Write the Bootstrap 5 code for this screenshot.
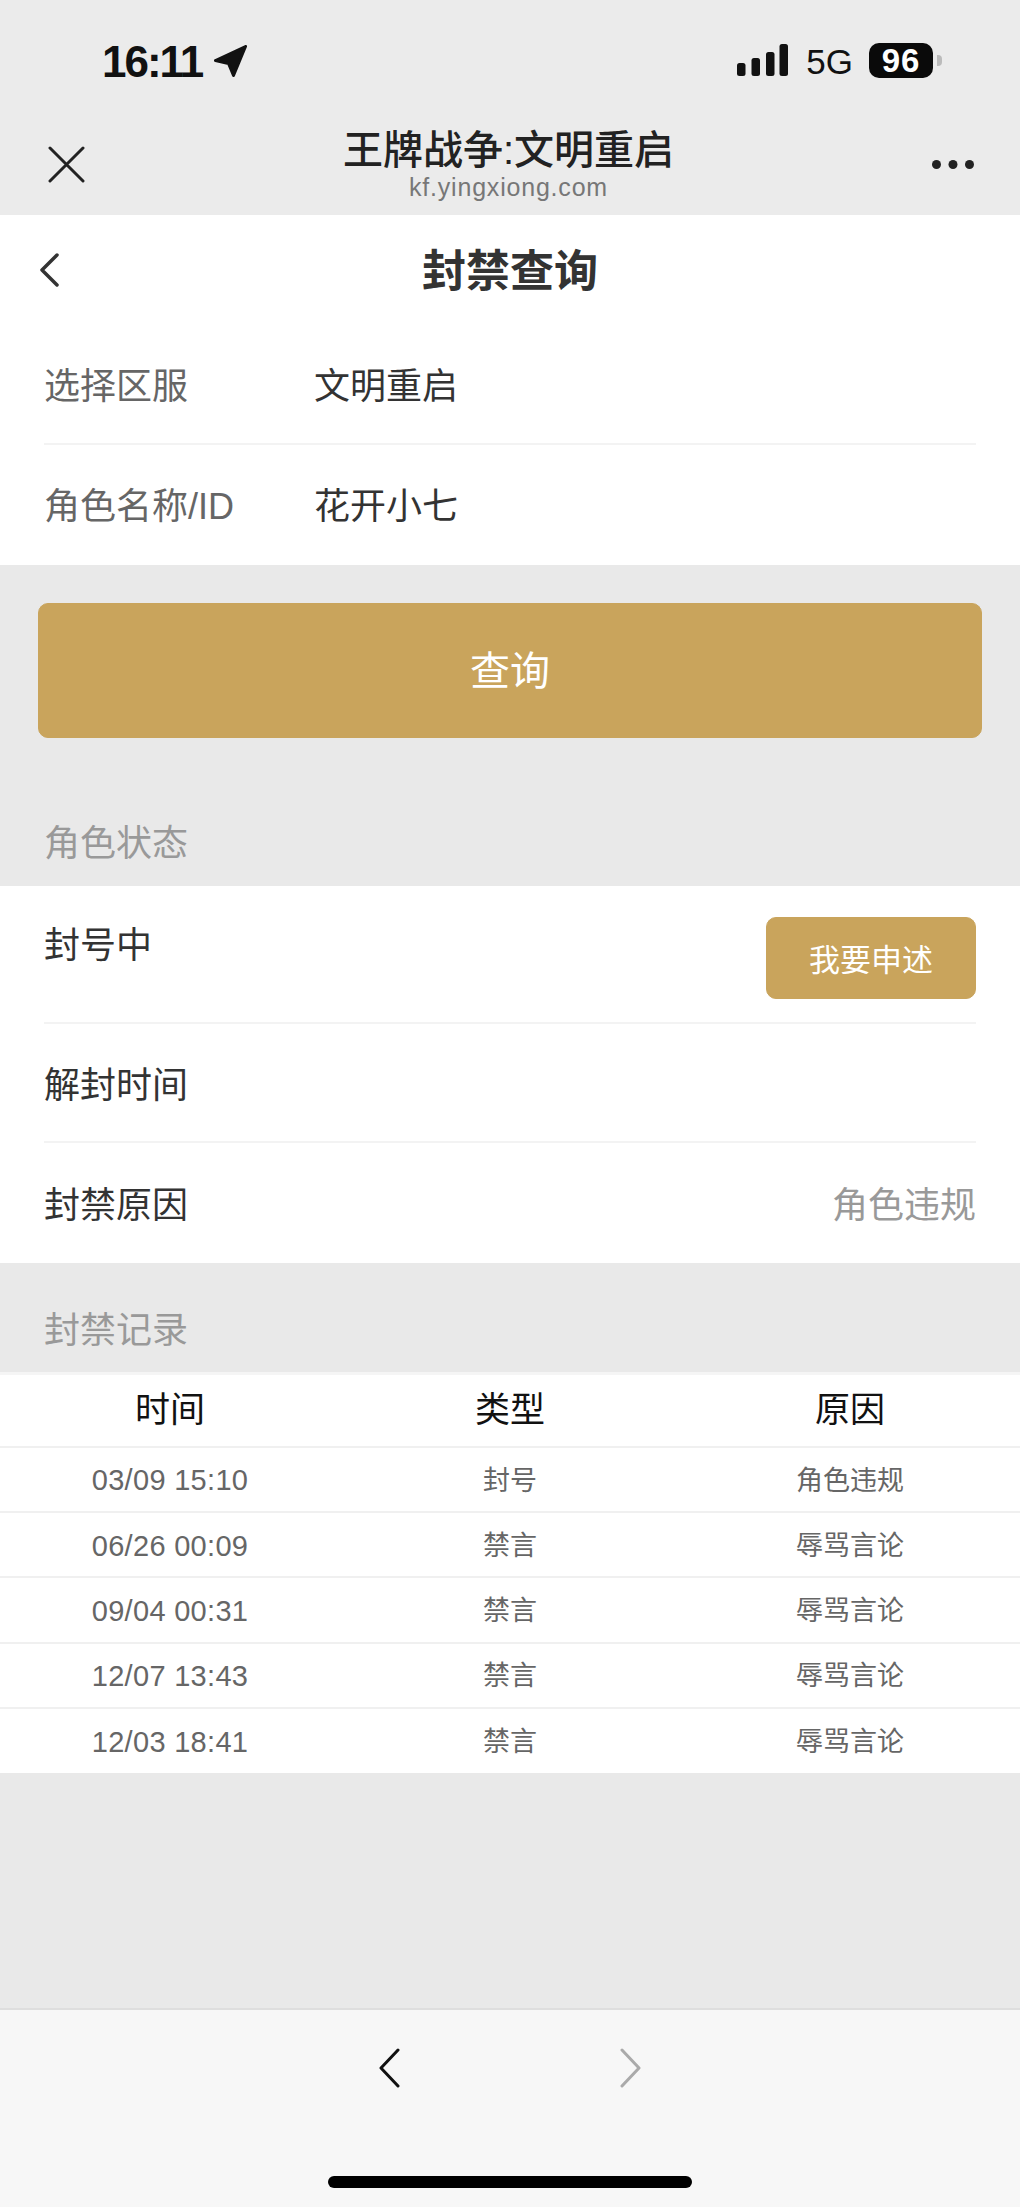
<!DOCTYPE html>
<html lang="zh-CN">
<head>
  <meta charset="UTF-8" />
  <title>封禁查询</title>
  <link href="https://cdn.jsdelivr.net/npm/bootstrap@5.3.3/dist/css/bootstrap.min.css" rel="stylesheet">
  <style>
    body {
      background: #e9e9e9;
      font-family: "Liberation Sans", "Noto Sans CJK SC", sans-serif;
      color: #333;
    }
    .page { height: 2207px; }
    .top-area { background: #ebebeb; height: 215px; }
    .status-bar { height: 122px; padding: 42px 87px 0 102px; color: #111; }
    .clock { font-size: 44px; font-weight: 700; line-height: 36px; letter-spacing: -2px; margin-top: 2px; }
    .arrow-icon { margin: 3px 0 0 12px; }
    .signal-icon { margin-top: 2px; }
    .net { font-size: 35px; line-height: 36px; margin: 2px 16px 0 18px; }
    .batt {
      width: 64px; height: 35px; margin-top: 1px; background: #0a0a0a; color: #fff; border-radius: 10px;
      font-size: 33px; font-weight: 700; line-height: 35px; letter-spacing: 1px; text-align: center; position: relative;
    }
    .batt::after {
      content: ""; position: absolute; right: -9px; top: 12px; width: 5px; height: 11px;
      background: #bbb; border-radius: 0 4px 4px 0;
    }
    .wx-bar { height: 93px; padding: 0 46px 8px 48px; }
    .wx-title { font-size: 40px; font-weight: 500; line-height: 46px; color: #222; margin-top: -2px; }
    .wx-url { font-size: 25px; line-height: 28px; color: #777; letter-spacing: .8px; }
    .panel-white { background: #fff; }
    .page-head { height: 110px; display: grid; grid-template-columns: 1fr auto 1fr; }
    .page-head svg { margin: 38px 0 0 40px; }
    .page-title { font-size: 44px; font-weight: 700; color: #333; line-height: 110px; margin-top: 2px; }
    .form-line {
      height: 120px; margin: 0 44px; font-size: 36px; line-height: 124px;
      border-bottom: 2px solid #f3f3f3;
    }
    .form-line:last-child { border-bottom: 0; }
    .form-key { width: 270px; color: #666; }
    .form-val { color: #333; }
    .gold-btn { --bs-btn-bg: #c9a45c; --bs-btn-border-color: #c9a45c; --bs-btn-color: #fff; }
    .query-wrap { padding: 38px 38px 0; }
    .query-btn { height: 135px; font-size: 40px; border-radius: 10px; }
    .sect-name { font-size: 36px; color: #999; line-height: 48px; padding-left: 44px; }
    .sect-status { height: 148px; padding-top: 82px; }
    .sect-record { height: 109px; padding-top: 44px; }
    .state-line {
      margin: 0 44px; font-size: 36px; color: #333; border-bottom: 2px solid #f3f3f3;
      height: 119px; line-height: 123px;
    }
    .state-line:last-child { border-bottom: 0; height: 120px; line-height: 125px; }
    .state-first { height: 138px; line-height: 120px; }
    .appeal-btn { width: 210px; height: 82px; margin-top: 31px; padding-top: 10px; font-size: 31px; line-height: 1; border-radius: 10px; }
    .muted-val { color: #999; }
    .record-table { border-top: 3px solid #f5f5f5; }
    .record-table .table { margin: 0; table-layout: fixed; --bs-table-border-color: #f0f0f0; }
    .record-table th, .record-table td { text-align: center; padding: 0; vertical-align: middle; border-bottom-width: 2px; }
    .record-table th { height: 72px; font-size: 35px; font-weight: 400; color: #111; }
    .record-table td { height: 65.2px; padding-top: 3px; font-size: 27px; color: #666; }
    .record-table tr:last-child td { border-bottom: 0; }
    .record-table .when { font-size: 29px; letter-spacing: .3px; }
    .filler { flex: 1 1 auto; }
    .bottom-bar { height: 199px; background: #f7f7f7; border-top: 2px solid #dedede; }
    .bottom-nav { padding-top: 38px; padding-left: 379px; gap: 220px; }
    .home-pill { margin: 88px 0 0 328px; width: 364px; height: 12px; background: #000; border-radius: 6px; }
  </style>
</head>
<body>
  <div class="page d-flex flex-column">
    <div class="top-area">
      <div class="status-bar d-flex align-items-start">
        <span class="clock">16:11</span>
        <svg class="arrow-icon" width="33" height="32" viewBox="0 0 33 32"><path d="M31.500 1.500 L1.500 15.500 L14.500 18.500 L19.500 30.500 Z" fill="#111" stroke="#111" stroke-width="3" stroke-linejoin="round"/></svg>
        <div class="ms-auto d-flex align-items-start">
          <svg class="signal-icon" width="51" height="32" viewBox="0 0 51 32"><rect x="0" y="19" width="8.500" height="13" rx="2.500" fill="#111"/><rect x="14.500" y="14" width="8.500" height="18" rx="2.500" fill="#111"/><rect x="29" y="8" width="8.500" height="24" rx="2.500" fill="#111"/><rect x="42.500" y="0" width="8.500" height="32" rx="2.500" fill="#111"/></svg>
          <span class="net">5G</span>
          <div class="batt">96</div>
        </div>
      </div>
      <div class="wx-bar d-flex align-items-center justify-content-between">
        <svg width="37" height="37" viewBox="0 0 37 37"><path d="M2 2 L35 35 M35 2 L2 35" stroke="#222" stroke-width="3" stroke-linecap="round" fill="none"/></svg>
        <div class="text-center">
          <div class="wx-title">王牌战争:文明重启</div>
          <div class="wx-url">kf.yingxiong.com</div>
        </div>
        <svg width="42" height="9" viewBox="0 0 42 9"><circle cx="4.500" cy="4.500" r="4.500" fill="#222"/><circle cx="21" cy="4.500" r="4.500" fill="#222"/><circle cx="37.500" cy="4.500" r="4.500" fill="#222"/></svg>
      </div>
    </div>

    <div class="panel-white">
      <div class="page-head">
        <svg width="19" height="34" viewBox="0 0 19 34"><path d="M17 2 L2 17 L17 32" stroke="#333" stroke-width="3.500" stroke-linecap="round" stroke-linejoin="round" fill="none"/></svg>
        <div class="page-title">封禁查询</div>
      </div>
      <div class="form-line d-flex"><span class="form-key">选择区服</span><span class="form-val">文明重启</span></div>
      <div class="form-line d-flex"><span class="form-key">角色名称/ID</span><span class="form-val">花开小七</span></div>
    </div>

    <div class="query-wrap">
      <button type="button" class="btn gold-btn query-btn w-100">查询</button>
    </div>

    <div class="sect-name sect-status">角色状态</div>
    <div class="panel-white">
      <div class="state-line state-first d-flex justify-content-between">
        <span>封号中</span>
        <button type="button" class="btn gold-btn appeal-btn">我要申述</button>
      </div>
      <div class="state-line">解封时间</div>
      <div class="state-line d-flex justify-content-between"><span>封禁原因</span><span class="muted-val">角色违规</span></div>
    </div>

    <div class="sect-name sect-record">封禁记录</div>
    <div class="record-table panel-white">
      <table class="table">
        <thead><tr><th>时间</th><th>类型</th><th>原因</th></tr></thead>
        <tbody id="rows"></tbody>
      </table>
    </div>

    <div class="filler"></div>

    <div class="bottom-bar">
      <div class="bottom-nav d-flex">
        <svg width="21" height="40" viewBox="0 0 21 40"><path d="M19 2 L2 20 L19 38" stroke="#111" stroke-width="3" stroke-linecap="round" stroke-linejoin="round" fill="none"/></svg>
        <svg width="21" height="40" viewBox="0 0 21 40"><path d="M2 2 L19 20 L2 38" stroke="#aaa" stroke-width="3" stroke-linecap="round" stroke-linejoin="round" fill="none"/></svg>
      </div>
      <div class="home-pill"></div>
    </div>
  </div>

  <script>
    const records = [
      ["03/09 15:10", "封号", "角色违规"],
      ["06/26 00:09", "禁言", "辱骂言论"],
      ["09/04 00:31", "禁言", "辱骂言论"],
      ["12/07 13:43", "禁言", "辱骂言论"],
      ["12/03 18:41", "禁言", "辱骂言论"]
    ];
    document.getElementById("rows").innerHTML = records.map(r => `
      <tr><td class="when">${r[0]}</td><td>${r[1]}</td><td>${r[2]}</td></tr>
    `).join("");
  </script>
  <script src="https://cdn.jsdelivr.net/npm/bootstrap@5.3.3/dist/js/bootstrap.bundle.min.js"></script>
</body>
</html>
